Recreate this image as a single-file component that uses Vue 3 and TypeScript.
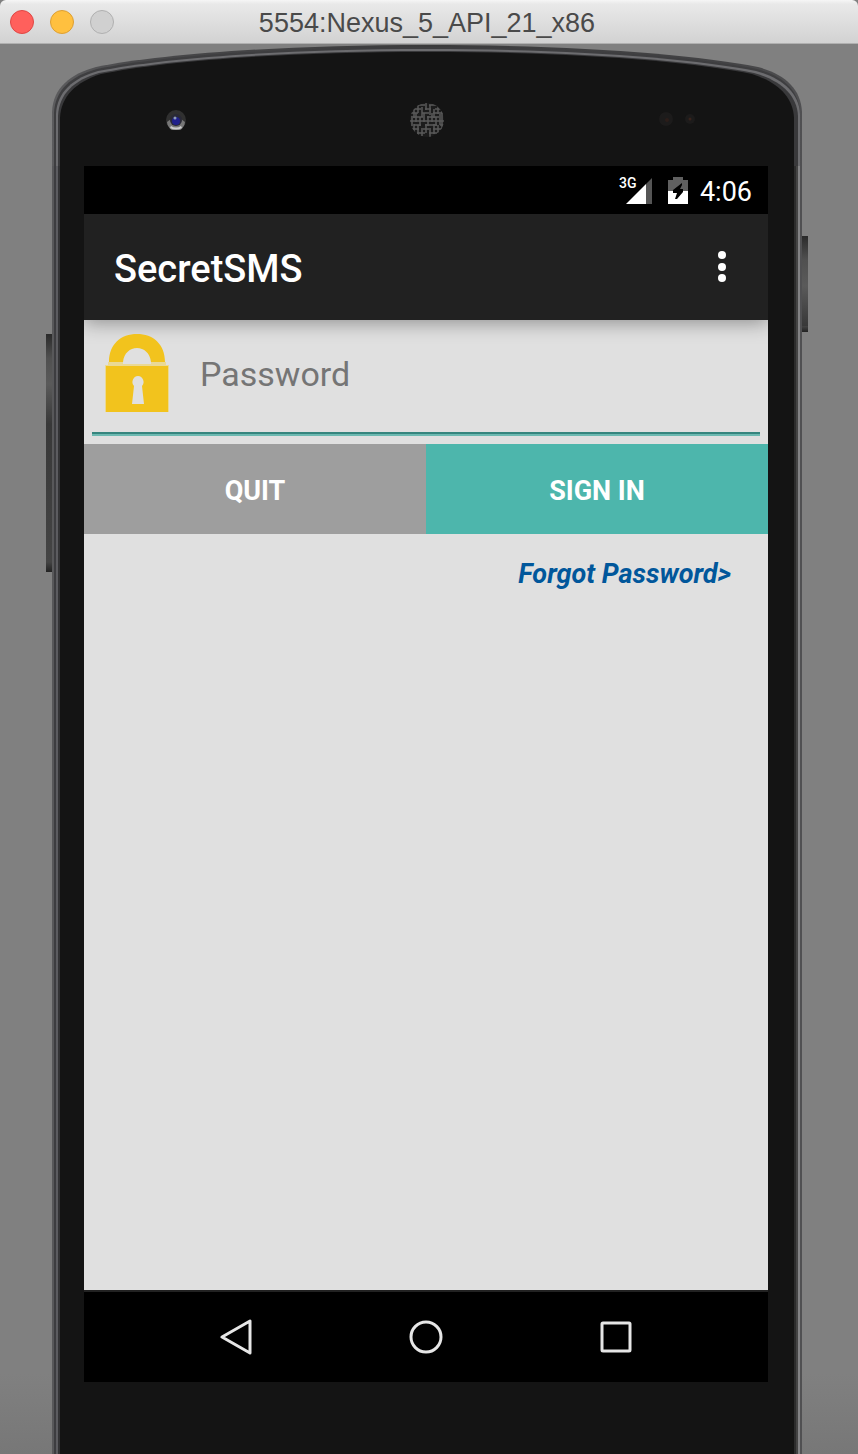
<script setup lang="ts">
import { ref } from 'vue'

const password = ref('')
const title = '5554:Nexus_5_API_21_x86'
</script>

<template>
  <div class="window">
    <header class="titlebar">
      <div class="lights">
        <button class="light close" aria-label="Close"></button>
        <button class="light minimise" aria-label="Minimise"></button>
        <button class="light zoom" aria-label="Zoom" disabled></button>
      </div>
      <h1 class="window-title">{{ title }}</h1>
    </header>

    <main class="stage">
      <div class="phone">
        <span class="side-key volume"></span>
        <span class="side-key power"></span>
        <div class="cap">
          <svg class="cap-shape" viewBox="0 0 750 122" preserveAspectRatio="none" aria-hidden="true">
            <defs>
              <linearGradient id="rim" x1="0" x2="1" y1="0" y2="0">
                <stop offset="0" stop-color="#5c5c5e" />
                <stop offset=".12" stop-color="#48484a" />
                <stop offset=".5" stop-color="#3b3b3c" />
                <stop offset=".9" stop-color="#434345" />
                <stop offset="1" stop-color="#505052" />
              </linearGradient>
            </defs>
            <path d="M0 122V68C1 44 18 30 44 23C110 10 230 1 375 1S640 10 706 23C732 30 749 44 750 68V122Z" fill="url(#rim)" />
            <path d="M2 122V69C3 46 19 32 45 25C111 12 230 3 375 3S639 12 705 25C731 32 747 46 748 69V122Z" fill="#3e3e40" />
            <path d="M4 122V70C5 48 21 34 46 27C112 14 230 5 375 5S638 14 704 27C729 34 747 48 748 70V122Z" fill="#6c6c6f" />
            <path d="M6 122V72C7 50 22 36 47 29C112 16 230 7 375 7S637 16 702 29C727 36 745 50 746 72V122Z" fill="#39393b" />
            <path d="M8 122V74C9 52 24 38 49 30C112 17 230 8 375 8S636 17 700 30C725 38 741 52 742 74V122Z" fill="#141414" />
          </svg>
          <div class="sensors">
            <svg class="camera" viewBox="0 0 20 20" aria-hidden="true">
              <circle cx="10" cy="10" r="10" fill="#303030" />
              <path d="M1 12a9 9 0 0 0 18 0l-4-3a5 5 0 0 1-10 0Z" fill="#777" />
              <path d="M5 16q5 3 10 0l1 2q-6 3-12 0Z" fill="#ccc" />
              <circle cx="10" cy="10" r="6" fill="#292936" />
              <circle cx="10" cy="11" r="4" fill="#20208a" />
              <circle cx="9" cy="8" r="1.5" fill="#8c9ab8" />
            </svg>
            <svg class="speaker" viewBox="0 0 36 36" aria-hidden="true">
              <defs>
                <clipPath id="grille"><circle cx="18" cy="18" r="17" /></clipPath>
              </defs>
              <circle cx="18" cy="18" r="17" fill="#1c1c1c" />
              <g clip-path="url(#grille)" fill="none" stroke="#5a5a5a" stroke-width="1.5">
                <path d="M8 3H16M20 3H28M4 7H12M16 7H22M26 7H32M1 11H9M13 11H20M24 11H35M4 15H14M18 15H30M1 19H35M5 23H12M16 23H28M31 23H35M3 27H10M14 27H20M24 27H33M8 31H16M20 31H28" />
                <path d="M5 7V16M9 3V11M13 5V15M17 1V8M21 3V13M25 7V16M29 4V12M33 9V28M3 14V24M7 11V20M11 15V24M15 11V20M19 14V24M23 11V20M27 15V24M31 12V23M5 22V30M9 23V33M13 26V34M17 22V31M21 26V35M25 22V32M29 23V31" />
              </g>
            </svg>
            <svg class="proximity" viewBox="0 0 40 16" aria-hidden="true">
              <circle cx="8" cy="7" r="7" fill="#1c1b1b" />
              <circle cx="9" cy="8" r="2" fill="#2b1d19" />
              <circle cx="32" cy="7" r="5" fill="#1c1b1b" />
              <circle cx="32" cy="7" r="1.5" fill="#38231c" />
            </svg>
          </div>
        </div>

        <div class="body">
          <div class="screen">
            <div class="statusbar">
              <svg class="signal" viewBox="0 0 34 28" role="img" aria-label="3G signal">
                <path d="M7 27L27 7V27Z" fill="#fff" />
                <path d="M27 7L33 1V27H27Z" fill="#555" />
                <text x="0" y="11" class="network">3G</text>
              </svg>
              <svg class="battery" viewBox="0 0 20 28" role="img" aria-label="Battery charging">
                <path d="M0 3H5V0H15V3H20V14H0Z" fill="#606060" />
                <path d="M0 14H20V27H0Z" fill="#fff" />
                <path d="M14 6L5 13V16H9L7 22H9L15 15V12H12L14 8Z" fill="#000" />
              </svg>
              <span class="clock">4:06</span>
            </div>

            <div class="appbar">
              <h2 class="app-title">SecretSMS</h2>
              <button class="overflow" aria-label="More options">
                <svg viewBox="0 0 8 32" aria-hidden="true">
                  <circle cx="4" cy="4" r="4" /><circle cx="4" cy="16" r="4" /><circle cx="4" cy="27" r="4" />
                </svg>
              </button>
            </div>

            <form class="content" @submit.prevent>
              <label class="field">
                <svg class="lock" viewBox="0 0 64 78" aria-hidden="true">
                  <path d="M4 28C4 10 16 0 32 0S60 10 60 28H46C45 19 39 14 32 14S19 19 18 28Z" fill="#f2c31d" />
                  <path d="M3 28H18V30H46V28H61V31H3Z" fill="#ead995" />
                  <path d="M0 31H64V78H0Z" fill="#ead995" />
                  <path d="M1 32H63V78H1Z" fill="#f2c31d" />
                  <path d="M33 42a6 6 0 0 1 4 10L39 70H27L29 52a6 6 0 0 1 4-10Z" fill="#e0e0e0" />
                </svg>
                <input v-model="password" class="password" type="password" placeholder="Password" aria-label="Password" />
              </label>
              <div class="actions">
                <button type="button" class="action quit">QUIT</button>
                <button type="submit" class="action sign-in">SIGN IN</button>
              </div>
              <a class="forgot" href="#forgot">Forgot Password&gt;</a>
            </form>

            <nav class="navbar">
              <button class="nav-key" aria-label="Back">
                <svg viewBox="0 0 36 36"><path d="M4 18L32 2V34Z" /></svg>
              </button>
              <button class="nav-key" aria-label="Home">
                <svg viewBox="0 0 36 36"><circle cx="18" cy="18" r="15" /></svg>
              </button>
              <button class="nav-key" aria-label="Overview">
                <svg viewBox="0 0 36 36"><rect x="4" y="4" width="28" height="28" rx="1" /></svg>
              </button>
            </nav>
          </div>
        </div>
      </div>
    </main>
  </div>
</template>

<style>
html,
body,
#app {
  height: 100%;
}

body {
  margin: 0;
}
</style>

<style scoped>
* {
  box-sizing: border-box;
}

button {
  border: 0;
  padding: 0;
  font: inherit;
  color: inherit;
}

.window {
  min-height: 100%;
  display: flex;
  flex-direction: column;
  background: linear-gradient(to bottom, #808080 calc(100% - 80px), #777);
  font-family: Roboto, sans-serif;
}

.titlebar {
  height: 44px;
  display: grid;
  grid-template-columns: 1fr auto 1fr;
  align-items: center;
  padding: 0 14px 0 10px;
  background: linear-gradient(#f6f6f6, #e9e9e9 4px, #d2d2d2);
  border-bottom: 1px solid #b0b0b0;
  border-radius: 6px 6px 0 0;
}

.lights {
  display: flex;
  gap: 16px;
}

.light {
  width: 24px;
  height: 24px;
  border-radius: 50%;
  border: 1px solid;
}

.close {
  background: #ff605c;
  border-color: #df4744;
}

.minimise {
  background: #ffc03f;
  border-color: #dd9f33;
}

.zoom {
  background: #d0d0d0;
  border-color: #b0b0b0;
}

.window-title {
  margin: 0;
  padding-top: 2px;
  font: 400 27px/40px "Liberation Sans", Arial, sans-serif;
  color: #4a4a4a;
}

.stage {
  flex: 1;
  display: flex;
  padding: 0 56px 0 52px;
}

.phone {
  position: relative;
  flex: 1;
  display: flex;
  flex-direction: column;
}

.side-key {
  position: absolute;
  width: 6px;
  background: linear-gradient(#2a2a2a, #505050 24px, #5a5a5a 50px, #383838 90px, #444 calc(100% - 10px), #222);
}

.volume {
  left: -6px;
  top: 290px;
  height: 238px;
}

.power {
  right: -6px;
  top: 192px;
  height: 96px;
}

.cap {
  position: relative;
  height: 122px;
}

.cap-shape {
  position: absolute;
  inset: 0;
  width: 100%;
  height: 100%;
}

.sensors {
  position: relative;
  display: grid;
  grid-template-columns: 1fr auto 1fr;
  align-items: center;
  padding: 58px 104px 0;
}

.camera {
  width: 20px;
  height: 20px;
  margin-left: 10px;
}

.speaker {
  width: 36px;
  height: 36px;
}

.proximity {
  width: 40px;
  height: 16px;
  justify-self: end;
}

.body {
  flex: 1;
  padding: 0 34px 72px 32px;
  background:
    linear-gradient(to right, #58585a 2px, #3d3d40 2px 4px, #5c5c60 4px 6px, #333335 6px) left / 8px 100% no-repeat,
    linear-gradient(to right, #2c2c2c 2px, #444 2px 4px, #838385 4px 6px, #505052 6px) right / 8px 100% no-repeat,
    #141414;
  display: flex;
}

.screen {
  flex: 1;
  display: flex;
  flex-direction: column;
  background: #e0e0e0;
}

.statusbar {
  height: 48px;
  display: flex;
  align-items: center;
  justify-content: flex-end;
  padding: 2px 16px 0;
  background: #000;
  color: #fff;
}

.signal {
  width: 34px;
  height: 28px;
  margin-right: 15px;
  overflow: visible;
}

.network {
  font: 500 14px Roboto, sans-serif;
  fill: #fff;
}

.battery {
  width: 20px;
  height: 28px;
  margin-right: 12px;
}

.clock {
  padding-top: 2px;
  font-size: 27px;
  line-height: 40px;
}

.appbar {
  position: relative;
  height: 106px;
  display: flex;
  align-items: center;
  justify-content: space-between;
  padding: 0 30px;
  background: #212121;
  color: #fff;
  box-shadow: 0 3px 18px rgba(0, 0, 0, 0.36);
  clip-path: inset(0 0 -24px 0);
}

.app-title {
  margin: 0;
  padding-top: 4px;
  font-size: 38px;
  font-weight: 500;
  line-height: 44px;
}

.overflow {
  width: 32px;
  height: 48px;
  display: grid;
  place-items: center;
  background: none;
}

.overflow svg {
  width: 8px;
  height: 32px;
  fill: #fff;
}

.content {
  flex: 1;
  display: flex;
  flex-direction: column;
}

.field {
  display: flex;
  align-items: center;
  gap: 31px;
  height: 116px;
  margin: 0 8px 8px;
  padding: 0 13px 8px;
  border-bottom: 2px solid #6cb9b1;
  box-shadow: inset 0 -2px #36857e;
}

.lock {
  position: relative;
  width: 64px;
  height: 78px;
}

.password {
  flex: 1;
  min-width: 0;
  border: 0;
  padding: 2px 0 0;
  outline: 0;
  background: none;
  font: 400 34px/44px Roboto, sans-serif;
  color: #212121;
}

.password::placeholder {
  color: #757575;
  opacity: 1;
}

.actions {
  display: grid;
  grid-template-columns: 1fr 1fr;
}

.action {
  height: 90px;
  padding-top: 4px;
  font-size: 27px;
  font-weight: 700;
  color: #fff;
}

.quit {
  background: #9e9e9e;
}

.sign-in {
  background: #4db6ac;
}

.forgot {
  align-self: flex-end;
  margin: 23px 37px 0;
  font-size: 27px;
  font-weight: 700;
  font-style: italic;
  line-height: 34px;
  color: #01579b;
  text-decoration: none;
}

.navbar {
  height: 92px;
  display: flex;
  align-items: center;
  justify-content: center;
  gap: 154px;
  background: #000;
  border-top: 2px solid #222;
}

.nav-key {
  width: 36px;
  height: 36px;
  background: none;
}

.nav-key svg {
  display: block;
  width: 36px;
  height: 36px;
  fill: none;
  stroke: #e6e6e6;
  stroke-width: 3px;
  stroke-linejoin: round;
}
</style>
